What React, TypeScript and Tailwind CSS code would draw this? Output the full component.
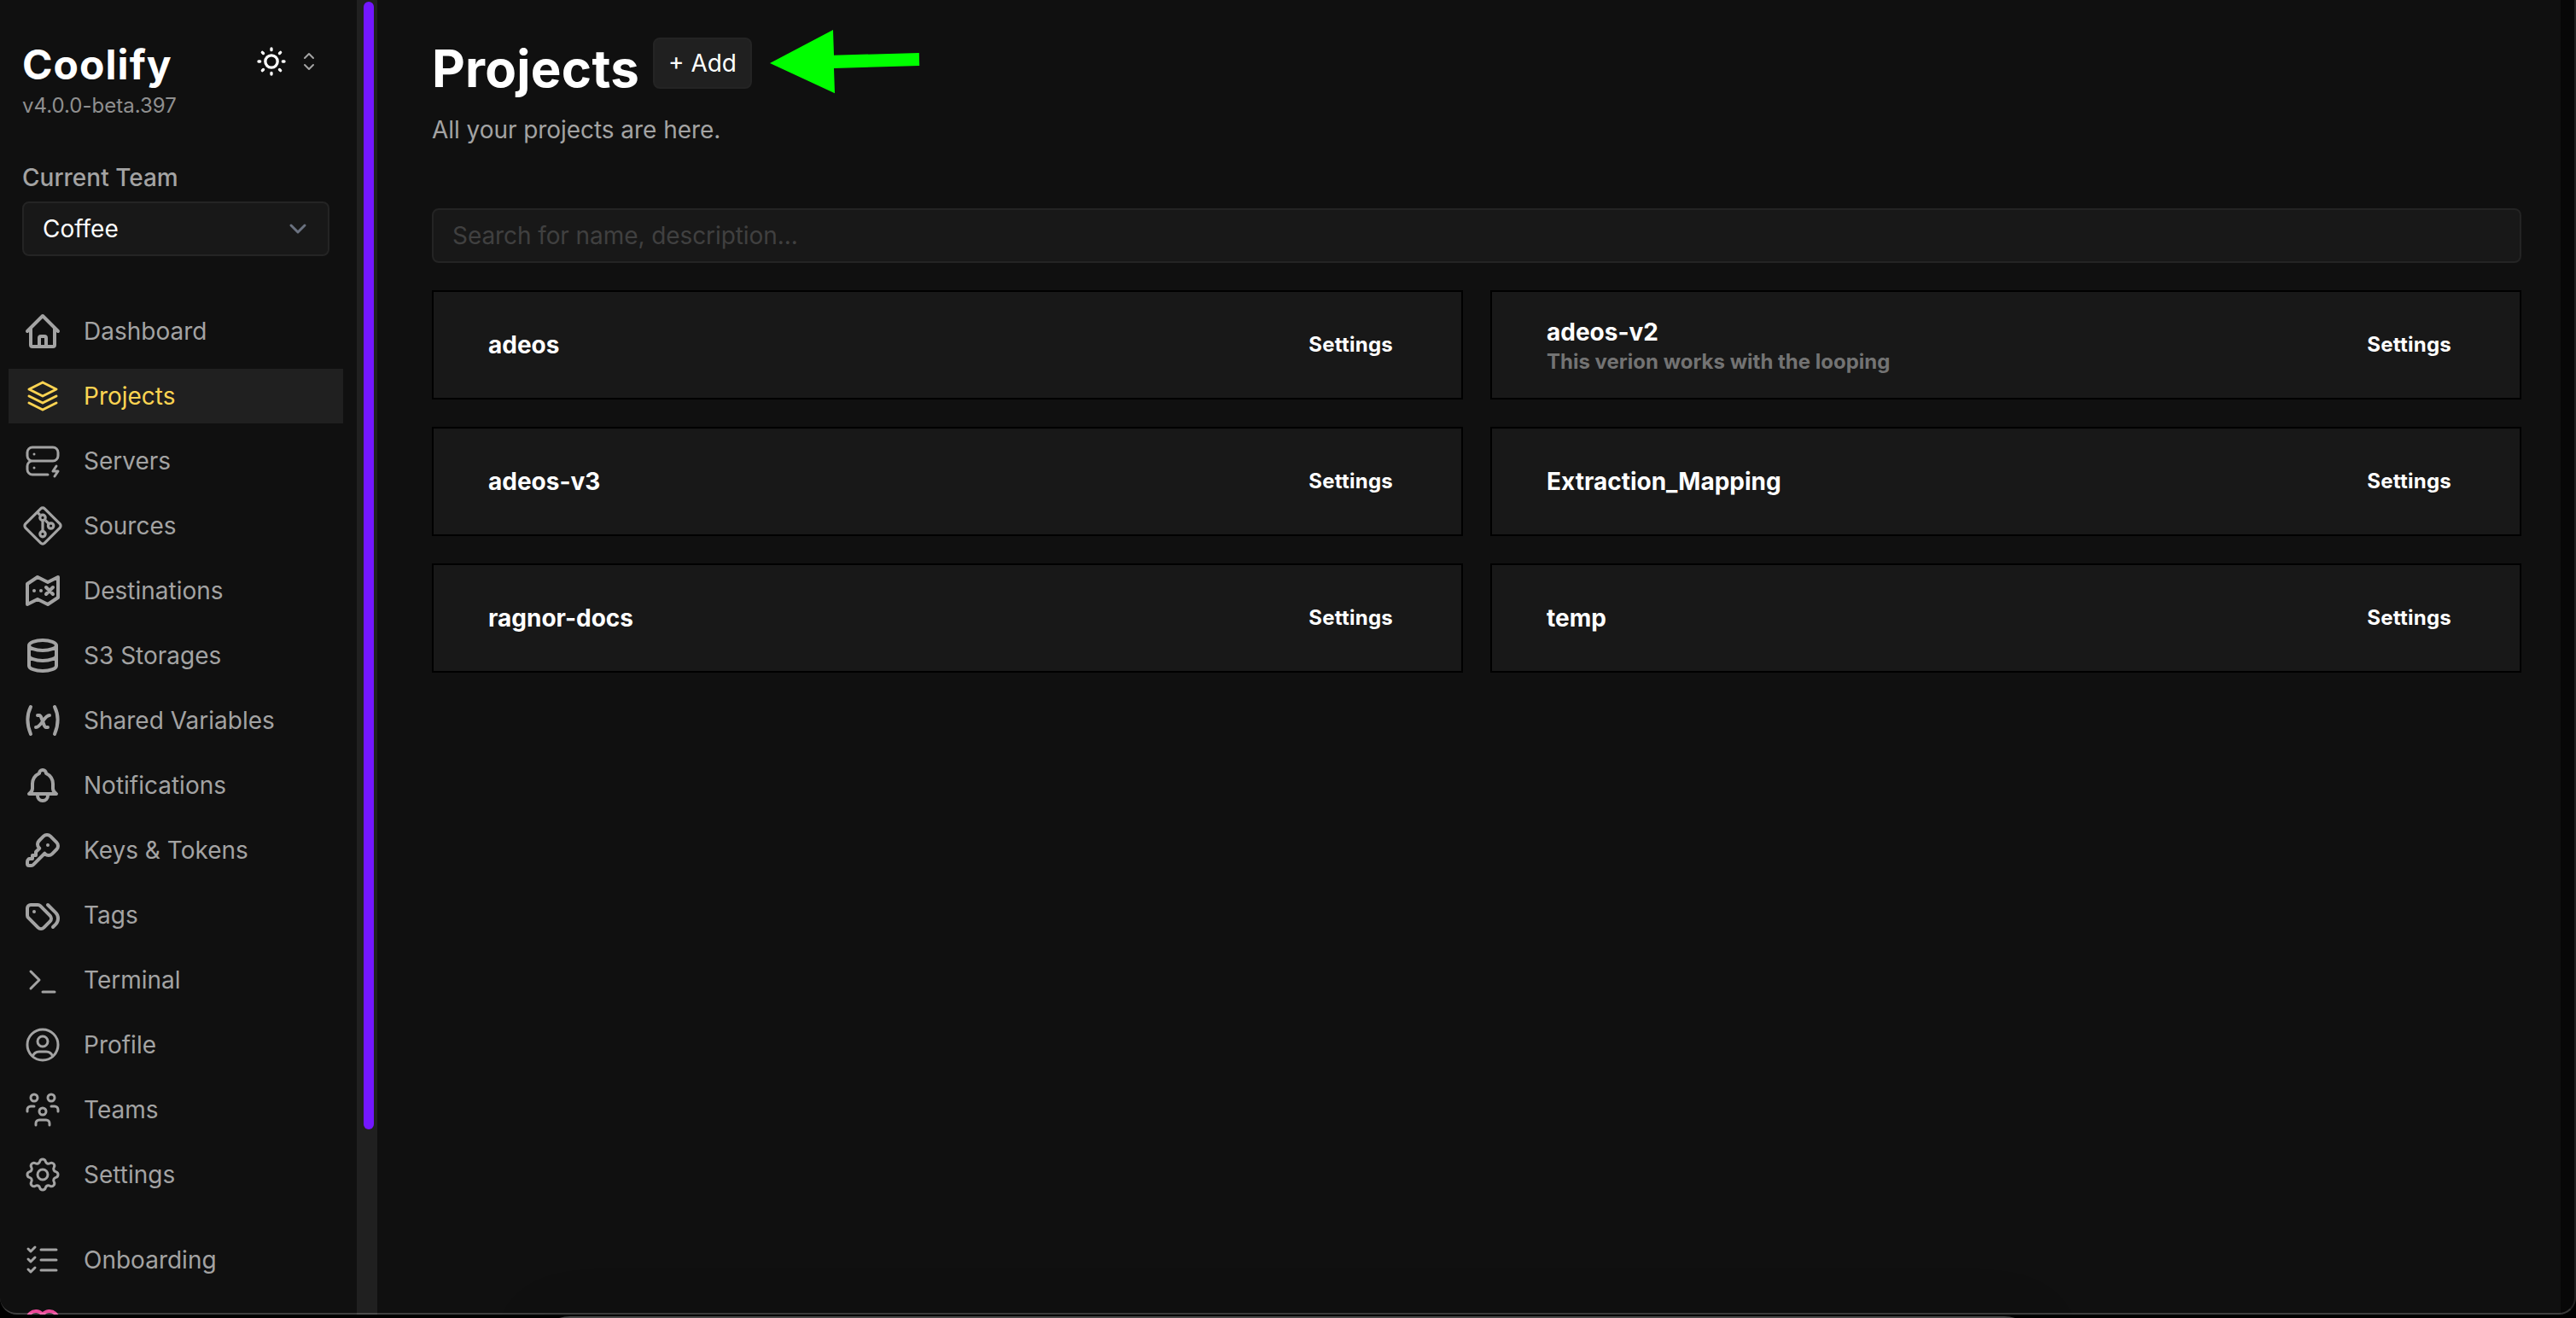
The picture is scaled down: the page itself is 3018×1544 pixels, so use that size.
import type { ReactNode } from 'react'

type NavItem = {
  label: string
  icon: ReactNode
  active?: boolean
}

function Icon({ d, width = 2 }: { d: string; width?: number }) {
  return (
    <svg
      className="w-12 h-12 shrink-0"
      viewBox="0 0 24 24"
      fill="none"
      stroke="currentColor"
      strokeWidth={width}
      strokeLinecap="round"
      strokeLinejoin="round"
    >
      <path d={d} />
    </svg>
  )
}

function GitIcon() {
  return (
    <svg className="w-12 h-12 shrink-0" viewBox="0 0 15 15" fill="none" stroke="currentColor">
      <path d="M6.793 1.207a1 1 0 0 1 1.414 0l5.586 5.586a1 1 0 0 1 0 1.414l-5.586 5.586a1 1 0 0 1-1.414 0L1.207 8.207a1 1 0 0 1 0-1.414z" />
      <path d="M5.5 2.5l1 1M8.5 5.5L10 7M7.5 5.5v4" />
      <circle cx="7.5" cy="4.5" r="1" />
      <circle cx="10.5" cy="7.5" r="1" />
      <circle cx="7.5" cy="10.5" r="1" />
    </svg>
  )
}

const navItems: NavItem[] = [
  {
    label: 'Dashboard',
    icon: (
      <Icon d="M3 12l2-2m0 0l7-7 7 7M5 10v10a1 1 0 001 1h3m10-11l2 2m-2-2v10a1 1 0 01-1 1h-3m-6 0a1 1 0 001-1v-4a1 1 0 011-1h2a1 1 0 011 1v4a1 1 0 001 1m-6 0h6" />
    ),
  },
  {
    label: 'Projects',
    icon: <Icon width={1.5} d="M12 4L4 8l8 4l8-4l-8-4M4 12l8 4l8-4M4 16l8 4l8-4" />,
    active: true,
  },
  {
    label: 'Servers',
    icon: (
      <Icon
        width={1.5}
        d="M3 7a3 3 0 0 1 3-3h12a3 3 0 0 1 3 3v2a3 3 0 0 1-3 3H6a3 3 0 0 1-3-3zM15 20H6a3 3 0 0 1-3-3v-2a3 3 0 0 1 3-3h12M7 8v.01M7 16v.01M20 15l-2 3h3l-2 3"
      />
    ),
  },
  { label: 'Sources', icon: <GitIcon /> },
  {
    label: 'Destinations',
    icon: (
      <Icon d="M9 4L3 8v12l6-3l6 3l6-4V4l-6 3l-6-3zm-2 8.001V12m4 .001V12m3-2l2 2m2 2l-2-2m0 0l2-2m-2 2l-2 2" />
    ),
  },
  {
    label: 'S3 Storages',
    icon: (
      <Icon d="M4 6a8 3 0 1 0 16 0A8 3 0 1 0 4 6M4 6v6a8 3 0 0 0 16 0V6M4 12v6a8 3 0 0 0 16 0v-6" />
    ),
  },
  {
    label: 'Shared Variables',
    icon: (
      <Icon d="M5 4C2.5 9 2.5 14 5 20M19 4c2.5 5 2.5 10 0 16M9 9h1c1 0 1 1 2.016 3.527C13 15 13 16 14 16h1M8 16c1.5 0 3-2 4-3.5S14.5 9 16 9" />
    ),
  },
  {
    label: 'Notifications',
    icon: (
      <Icon d="M10 5a2 2 0 1 1 4 0a7 7 0 0 1 4 6v3a4 4 0 0 0 2 3H4a4 4 0 0 0 2-3v-3a7 7 0 0 1 4-6M9 17v1a3 3 0 0 0 6 0v-1" />
    ),
  },
  {
    label: 'Keys & Tokens',
    icon: (
      <Icon d="M16.555 3.843l3.602 3.602a2.877 2.877 0 0 1 0 4.069l-2.643 2.643a2.877 2.877 0 0 1-4.069 0l-.301-.301l-6.558 6.558a2 2 0 0 1-1.239.578L5.172 21H4a1 1 0 0 1-.993-.883L3 20v-1.172a2 2 0 0 1 .467-1.284l.119-.13L4 17h2v-2h2v-2l2.144-2.144l-.301-.301a2.877 2.877 0 0 1 0-4.069l2.643-2.643a2.877 2.877 0 0 1 4.069 0zM15 9h.01" />
    ),
  },
  {
    label: 'Tags',
    icon: (
      <Icon d="M3 8v4.172a2 2 0 0 0 .586 1.414l5.71 5.71a2.41 2.41 0 0 0 3.408 0l3.592-3.592a2.41 2.41 0 0 0 0-3.408l-5.71-5.71A2 2 0 0 0 9.172 6H5a2 2 0 0 0-2 2M18 19l1.592-1.592a4.82 4.82 0 0 0 0-6.816L15 6M7 10h-.01" />
    ),
  },
  { label: 'Terminal', icon: <Icon width={1.5} d="M5 7l5 5l-5 5M12 19h7" /> },
  {
    label: 'Profile',
    icon: (
      <Icon
        width={1.5}
        d="M3 12a9 9 0 1 0 18 0a9 9 0 1 0-18 0M9 10a3 3 0 1 0 6 0a3 3 0 1 0-6 0M6.168 18.849A4 4 0 0 1 10 16h4a4 4 0 0 1 3.834 2.855"
      />
    ),
  },
  {
    label: 'Teams',
    icon: (
      <Icon
        width={1.5}
        d="M10 13a2 2 0 1 0 4 0a2 2 0 0 0-4 0m-2 8v-1a2 2 0 0 1 2-2h4a2 2 0 0 1 2 2v1M15 5a2 2 0 1 0 4 0a2 2 0 0 0-4 0m2 5h2a2 2 0 0 1 2 2v1M5 5a2 2 0 1 0 4 0a2 2 0 0 0-4 0m-2 8v-1a2 2 0 0 1 2-2h2"
      />
    ),
  },
  {
    label: 'Settings',
    icon: (
      <Icon
        width={1.5}
        d="M10.325 4.317c.426-1.756 2.924-1.756 3.35 0a1.724 1.724 0 0 0 2.573 1.066c1.543-.94 3.31.826 2.37 2.37a1.724 1.724 0 0 0 1.065 2.572c1.756.426 1.756 2.924 0 3.35a1.724 1.724 0 0 0-1.066 2.573c.94 1.543-.826 3.31-2.37 2.37a1.724 1.724 0 0 0-2.572 1.065c-.426 1.756-2.924 1.756-3.35 0a1.724 1.724 0 0 0-2.573-1.066c-1.543.94-3.31-.826-2.37-2.37a1.724 1.724 0 0 0-1.065-2.572c-1.756-.426-1.756-2.924 0-3.35a1.724 1.724 0 0 0 1.066-2.573c-.94-1.543.826-3.31 2.37-2.37c1 .608 2.296.07 2.572-1.065zM9 12a3 3 0 1 0 6 0a3 3 0 0 0-6 0"
      />
    ),
  },
]

const projects = [
  { name: 'adeos' },
  { name: 'adeos-v2', description: 'This verion works with the looping' },
  { name: 'adeos-v3' },
  { name: 'Extraction_Mapping' },
  { name: 'ragnor-docs' },
  { name: 'temp' },
]

function MenuItem({ label, icon, active }: NavItem) {
  return (
    <a
      className={`flex items-center gap-6 h-16 w-[392px] pl-4 text-[28px] ${
        active ? 'bg-[#202020] text-[#fcd452]' : 'text-[#a3a3a3]'
      }`}
    >
      {icon}
      {label}
    </a>
  )
}

function Sidebar() {
  return (
    <aside className="w-[418px] shrink-0 h-full overflow-hidden">
      <div className="flex justify-between h-[188px] pt-[46px] pl-[26px] pr-10">
        <div>
          <div className="text-5xl leading-[60px] font-bold tracking-[0.022em] text-white">Coolify</div>
          <div className="text-2xl leading-9 text-[#8f8f8f]">v4.0.0-beta.397</div>
        </div>
        <div className="flex items-center gap-2 h-[52px]">
          <svg
            className="w-10 h-10 text-white"
            viewBox="0 0 24 24"
            fill="none"
            stroke="currentColor"
            strokeWidth="2"
            strokeLinecap="round"
            strokeLinejoin="round"
          >
            <path d="M7.7 12a4.3 4.3 0 1 0 8.6 0a4.3 4.3 0 1 0-8.6 0M3 12h1m8-9v1m8 8h1m-9 8v1M5.6 5.6l.7.7m12.1-.7l-.7.7m0 11.4l.7.7m-12.1-.7l-.7.7" />
          </svg>
          <svg
            className="w-8 h-8 text-[#a3a3a3]"
            viewBox="0 0 24 24"
            fill="none"
            stroke="currentColor"
            strokeWidth="1.5"
            strokeLinecap="round"
            strokeLinejoin="round"
          >
            <path d="M8.25 15L12 18.75L15.75 15m-7.5-6L12 5.25L15.75 9" />
          </svg>
        </div>
      </div>
      <div className="pl-[26px] h-[184px]">
        <div className="text-[28px] leading-10 font-medium text-[#a3a3a3]">Current Team</div>
        <div className="mt-2 flex items-center justify-between w-[360px] h-16 pl-[22px] pr-[15px] rounded-lg border-2 border-[#242424] bg-[#181818] text-[28px] text-white">
          Coffee
          <svg className="w-10 h-10 text-[#6b7280]" viewBox="0 0 20 20" fill="none" stroke="currentColor">
            <path d="M6 8l4 4 4-4" strokeWidth="1.5" strokeLinecap="round" strokeLinejoin="round" />
          </svg>
        </div>
      </div>
      <nav className="flex flex-col gap-3 pl-2.5 -mt-4">
        {navItems.map((item) => (
          <MenuItem key={item.label} {...item} />
        ))}
        <div className="mt-6 flex flex-col gap-3">
          <MenuItem
            label="Onboarding"
            icon={
              <Icon
                width={1.5}
                d="M3.5 5.5L5 7l2.5-2.5m-4 7L5 13l2.5-2.5m-4 7L5 19l2.5-2.5M11 6h9m-9 6h9m-9 6h9"
              />
            }
          />
          <div className="flex items-center h-16 pl-4 text-[#ec4899]">
            <Icon d="M19.5 12.572L12 20l-7.5-7.428A5 5 0 1 1 12 6.006a5 5 0 1 1 7.5 6.572" />
          </div>
        </div>
      </nav>
    </aside>
  )
}

function ProjectCard({ name, description }: { name: string; description?: string }) {
  return (
    <div className="flex items-center justify-between h-32 pl-16 pr-20 border-2 border-black bg-[#181818] font-bold text-white">
      <div className={description ? 'pt-1' : ''}>
        <div className="text-[28px] leading-9">{name}</div>
        {description && <div className="text-2xl leading-[34px] text-[#737373]">{description}</div>}
      </div>
      <div className="text-2xl tracking-[0.01em]">Settings</div>
    </div>
  )
}

export default function App() {
  return (
    <div className="relative w-[3018px] h-[1544px] overflow-hidden bg-black font-['Inter','Liberation_Sans',sans-serif]">
      <div className="flex h-[1540px] overflow-hidden rounded-b-[20px] bg-[#101010]">
        <Sidebar />
        <div className="w-6 shrink-0 pl-2 pt-0.5 bg-[#202020]">
          <div className="w-3 h-[1321px] rounded-full bg-[#7317ff]" />
        </div>
        <main className="flex-1 pl-16 pr-[46px] pt-11">
          <div className="flex items-start gap-4 h-[90px]">
            <h1 className="text-6xl leading-[72px] font-bold tracking-[0.004em] text-white">Projects</h1>
            <button className="h-[60px] w-[116px] rounded-lg border-2 border-[#242424] bg-[#202020] text-[28px] text-white">
              + Add
            </button>
          </div>
          <div className="text-[28px] leading-9 tracking-[-0.002em] text-[#a3a3a3]">All your projects are here.</div>
          <div className="mt-[74px] flex items-center h-16 px-[22px] rounded-lg border-2 border-[#242424] bg-[#181818] text-[28px] tracking-[-0.003em] text-[#404040]">
            Search for name, description...
          </div>
          <div className="mt-8 grid grid-cols-2 gap-8">
            {projects.map((project) => (
              <ProjectCard key={project.name} {...project} />
            ))}
          </div>
        </main>
        <div className="w-[18px] shrink-0 bg-[#070707]" />
      </div>
      {/* window frame and the dock peeking out under it */}
      <div className="absolute left-0 -top-6 w-[3018px] h-[1564px] rounded-[20px] border-r-2 border-b-2 border-r-white/10 border-b-white/20" />
      <div className="absolute left-[628px] top-[1542px] w-[1760px] h-20 rounded-[40px] border-2 border-[#4a4a4a] bg-[#2a2426] shadow-[0_0_60px_rgba(0,0,0,0.15)]" />
      <svg className="absolute left-[900px] top-8 w-[180px] h-20" viewBox="900 32 180 80">
        <path d="M902 74L976 35L977 64.7L1076.8 62L1077.2 77L977 80L978 109.3z" fill="#00ff00" />
      </svg>
    </div>
  )
}
